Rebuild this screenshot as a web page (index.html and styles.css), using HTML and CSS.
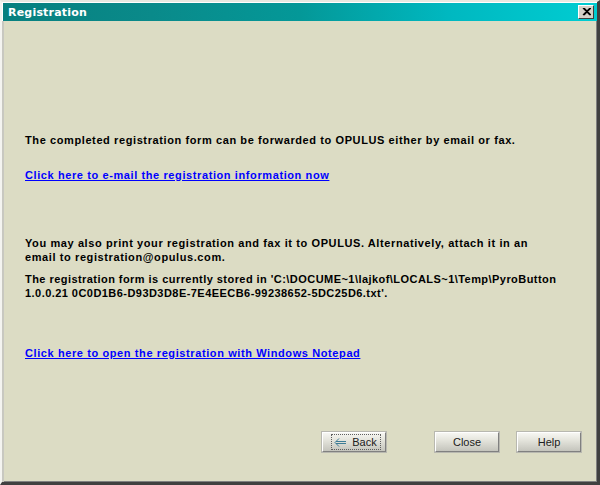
FILE: index.html
```html
<!DOCTYPE html>
<html>
<head>
<meta charset="utf-8">
<link rel="stylesheet" href="styles.css">
</head>
<body>
<div class="window">
  <div class="titlebar">
    <span class="title">Registration</span>
    <span class="close-btn"><svg width="9" height="8" viewBox="0 0 9 8"><path d="M1 0 L8 7 M2 0 L9 7 M8 0 L1 7 M9 0 L2 7" stroke="#000" stroke-width="1.2"/></svg></span>
  </div>
  <div class="content">
    <p class="text p1">The completed registration form can be forwarded to OPULUS either by email or fax.</p>
    <a class="link l1" href="#">Click here to e-mail the registration information now</a>
    <p class="text p2">You may also print your registration and fax it to OPULUS. Alternatively, attach it in an<br>email to registration@opulus.com.</p>
    <p class="text p3">The registration form is currently stored in 'C:\DOCUME~1\lajkof\LOCALS~1\Temp\PyroButton<br>1.0.0.21 0C0D1B6-D93D3D8E-7E4EECB6-99238652-5DC25D6.txt'.</p>
    <a class="link l2" href="#">Click here to open the registration with Windows Notepad</a>
    <div class="buttons">
      <button class="btn back"><span class="focus"><svg width="13" height="9" viewBox="0 0 13 9"><path d="M5 0.5 L1 4.5 L5 8.5 M2 3.5 H12 M2 5.5 H12" fill="none" stroke="#3d7c96" stroke-width="1"/></svg>Back</span></button>
      <button class="btn close">Close</button>
      <button class="btn help">Help</button>
    </div>
  </div>
</div>
</body>
</html>
```
FILE: styles.css
```css
html, body {
  margin: 0;
  padding: 0;
  background: #dcdcc4;
}
.window {
  width: 600px;
  height: 485px;
  box-sizing: border-box;
  background: #dcdcc4;
  border-top: 2px solid #e8e8e0;
  border-left: 2px solid #f4f4f0;
  border-right: 3px solid #404040;
  border-bottom: 3px solid #404040;
  box-shadow: inset 1px 1px 0 #fff, inset -1px -1px 0 #808080;
  display: flex;
  flex-direction: column;
  position: relative;
}
.titlebar {
  height: 18px;
  margin: 1px 0 0 1px;
  background: linear-gradient(to right, #07807f 0%, #0a8a8a 25%, #049898 50%, #00b8c0 75%, #00cdd2 100%);
  display: flex;
  align-items: center;
  justify-content: space-between;
  padding: 0 3px 0 5px;
}
.title {
  font-family: Tahoma, "DejaVu Sans", sans-serif;
  font-weight: bold;
  font-size: 11px;
  color: #fff;
  letter-spacing: 0.2px;
}
.close-btn {
  width: 16px;
  height: 14px;
  box-sizing: border-box;
  background: #d4d0c8;
  border-top: 1px solid #fff;
  border-left: 1px solid #fff;
  border-right: 1px solid #404040;
  border-bottom: 1px solid #404040;
  display: flex;
  align-items: center;
  justify-content: center;
}
.content {
  flex: 1;
  display: flex;
  flex-direction: column;
  align-items: flex-start;
  padding: 0 0 0 21px;
  border-left: 2px solid #c8c8c0;
}
.text, .link {
  font-family: "Liberation Sans", Arial, sans-serif;
  font-weight: bold;
  font-size: 11px;
  line-height: 14px;
  margin: 0;
  letter-spacing: 0.6px;
  white-space: nowrap;
}
.text { color: #000; }
.link {
  color: #0000ff;
  text-decoration: underline;
}
.p1 { margin-top: 112px; }
.l1 { margin-top: 21px; }
.p2 { margin-top: 54px; }
.p3 { margin-top: 8px; letter-spacing: 0.45px; }
.l2 { margin-top: 46px; }
.buttons {
  margin-top: 72px;
  align-self: stretch;
  display: flex;
  justify-content: flex-end;
  padding-right: 16px;
}
.btn {
  width: 64px;
  height: 20px;
  box-sizing: border-box;
  font-family: "Liberation Sans", Arial, sans-serif;
  font-size: 11px;
  color: #202020;
  background: linear-gradient(to bottom, #f6f6f2 0%, #e4e4dc 40%, #c4c4bc 100%);
  border: 1px solid;
  border-color: #ffffff #808080 #808080 #ffffff;
  box-shadow: 0 0 0 1px #b8b8b0;
  padding: 0;
  display: flex;
  align-items: center;
  justify-content: center;
}
.back { margin-right: 49px; }
.close { margin-right: 18px; }
.focus {
  display: flex;
  align-items: center;
  gap: 5px;
  border: 1px dotted #606060;
  padding: 1px 3px 1px 2px;
  margin-left: 4px;
}
```
